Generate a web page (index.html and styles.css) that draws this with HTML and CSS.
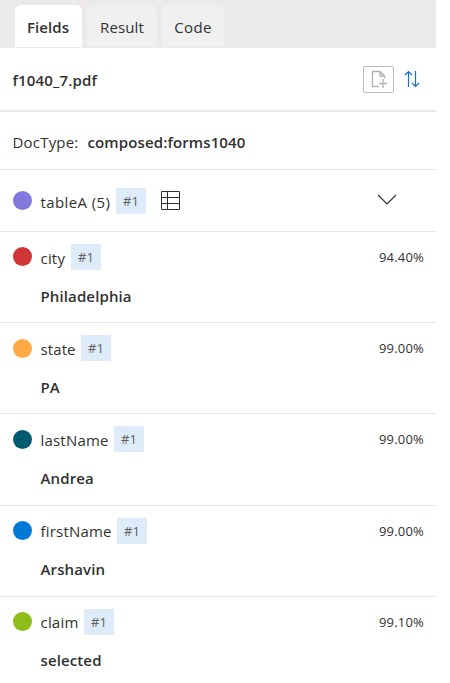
FILE: index.html
```
<!DOCTYPE html>
<html lang="en">
<head>
<meta charset="utf-8">
<title>Fields</title>
<link rel="stylesheet" href="styles.css">
</head>
<body>
<main class="panel">
  <nav class="tabs">
    <button class="tab tab-fields active"><span>Fields</span></button>
    <button class="tab tab-result"><span>Result</span></button>
    <button class="tab tab-code"><span>Code</span></button>
  </nav>
  <header class="file">
    <h1 class="file-name">f1040_7.pdf</h1>
    <button class="add" aria-label="Add page">
      <svg width="18" height="18" viewBox="0 0 18 18" fill="none" stroke="#b3b0ad"><path d="M9 16.5H2.5V1.5H10L14.5 6V8.5M10 1.5V6H14.5M13 9V18M9 13.5H17" stroke-width="1.3"/></svg>
    </button>
    <button class="sort" aria-label="Sort">
      <svg width="16" height="18" viewBox="0 0 16 18" fill="none" stroke="#1b6ec9" stroke-width="1.2"><path d="M4.5 17V1.5M1 5L4.5 1.5L8 5M11.5 1V16.5M8 13L11.5 16.5L15 13"/></svg>
    </button>
  </header>
  <div class="doctype"><span class="doc-label">DocType:</span><strong class="doc-value">composed:forms1040</strong></div>
  <section class="field table-field">
    <i class="dot purple"></i><span class="name w-table">tableA (5)</span><span class="tag">#1</span>
    <svg class="grid-icon" width="19" height="19" viewBox="0 0 19 19" fill="none" stroke="#323130"><path d="M.5 .5H18.5V18.5H.5ZM.5 6.5H18.5M.5 12.5H18.5M6.5 .5V18.5"/></svg>
    <svg class="chevron" width="20" height="12" viewBox="0 0 20 12" fill="none" stroke="#323130" stroke-width="1.2"><path d="M1 1L10 10L19 1"/></svg>
  </section>
  <section class="field"><i class="dot red"></i><span class="name w-city">city</span><span class="tag">#1</span><span class="score">94.40%</span><strong class="value">Philadelphia</strong></section>
  <section class="field"><i class="dot low orange"></i><span class="name w-state">state</span><span class="tag">#1</span><span class="score">99.00%</span><strong class="value">PA</strong></section>
  <section class="field tall"><i class="dot low teal"></i><span class="name w-last">lastName</span><span class="tag">#1</span><span class="score">99.00%</span><strong class="value">Andrea</strong></section>
  <section class="field raised"><i class="dot blue"></i><span class="name w-first">firstName</span><span class="tag">#1</span><span class="score">99.00%</span><strong class="value">Arshavin</strong></section>
  <section class="field raised last"><i class="dot green"></i><span class="name w-claim">claim</span><span class="tag">#1</span><span class="score">99.10%</span><strong class="value">selected</strong></section>
</main>
</body>
</html>
```

FILE: styles.css
```
* { box-sizing: border-box; }
body { margin: 0; background: #fff; color: #323130; font: 15px/22px "Open Sans", "Noto Sans", sans-serif; letter-spacing: .12px; overflow: hidden; }
button { font: inherit; color: inherit; background: none; border: 0; padding: 0; }
strong, h1 { font-weight: 600; }
.panel { width: 436px; }
.tabs { display: flex; gap: 5px; height: 48px; padding: 5px 0 1px 15px; background: #ebeae9; }
.tab { background: #f0f0f0; border-radius: 6px 6px 0 0; height: 42px; padding-top: 2px; white-space: nowrap; letter-spacing: .1px; }
.tab.active { background: #fff; font-weight: 600; }
.tab-fields { width: 67px; padding-right: 1px; }
.tab-result { width: 70px; }
.tab-code { width: 62px; letter-spacing: .4px; }
.file { display: flex; align-items: center; height: 64px; padding: 0 16px 0 12.5px; border-bottom: 2px solid #e8e8e8; }
.file-name { margin: 1px auto 0 0; font-size: 15px; line-height: 22px; letter-spacing: .15px; }
.add { display: flex; align-items: center; justify-content: center; width: 31px; height: 27px; border: 1px solid #bebbb8; border-radius: 2px; }
.sort { display: flex; margin-left: 10px; }
.doctype { display: flex; align-items: center; height: 58px; padding: 2px 12px 0 12.5px; border-bottom: 1px solid #e8e8e8; }
.doc-label { width: 75px; letter-spacing: .2px; }
.field { display: grid; grid-template-columns: 28.5px auto 30px 1fr; grid-template-rows: 26px 1fr; height: 91px; padding: 12px 12px 0; border-bottom: 1px solid #e8e8e8; }
.field.tall { height: 92px; }
.field.last { border: 0; height: 86px; }
.dot { width: 19px; height: 19px; margin: 3px 0 0 .5px; border-radius: 50%; }
.dot.low { margin-top: 4px; }
.name { padding-top: 3px; white-space: nowrap; letter-spacing: .2px; }
.tag { width: 30px; height: 26px; background: #deecf9; color: #605e5c; font-size: 13px; line-height: 26px; text-align: center; }
.score { justify-self: end; font-size: 13px; line-height: 26px; letter-spacing: .2px; }
.value { grid-column: 2 / -1; padding-top: 15px; }
.raised .name { padding-top: 2px; }
.raised .value { padding-top: 14px; }
.table-field { grid-template-columns: 28.5px auto 30px auto 1fr; height: 62px; padding-top: 18px; }
.grid-icon { margin: 3px 0 0 15px; }
.chevron { justify-self: end; margin: 6px 27px 0 0; }
.w-table { width: 75.5px; letter-spacing: .4px; }
.w-city { width: 30.5px; }
.w-state { width: 40.5px; letter-spacing: .1px; }
.w-last { width: 73.5px; }
.w-first { width: 76.5px; }
.w-claim { width: 43.5px; }
.purple { background: #8378de; }
.red { background: #d13438; }
.orange { background: #ffaa44; }
.teal { background: #005b70; }
.blue { background: #0078d7; }
.green { background: #8cbd18; }
```
